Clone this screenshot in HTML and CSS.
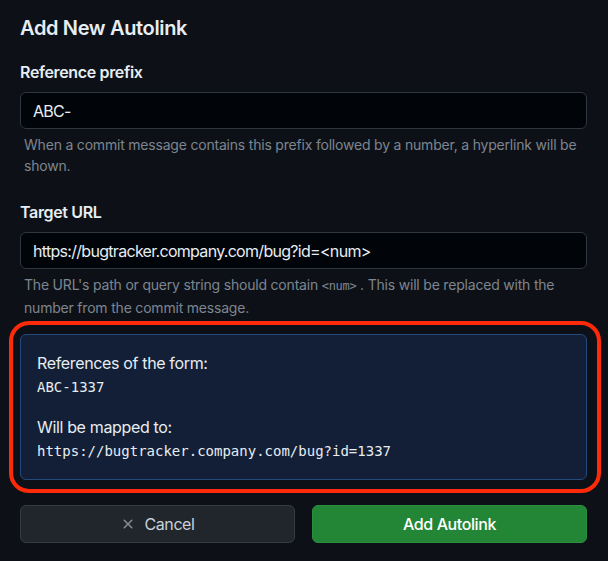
FILE: index.html
```html
<!DOCTYPE html>
<html lang="en">
  <head>
    <meta charset="UTF-8" />
    <meta name="viewport" content="width=device-width, initial-scale=1.0" />
    <title>Add New Autolink</title>
    <link rel="stylesheet" href="styles.css">
  </head>
  <body>
    <main class="autolink-form">
      <h2>Add New Autolink</h2>

      <div class="form-group">
        <label for="prefix">Reference prefix</label>
        <input type="text" id="prefix" value="ABC-" />
        <p class="hint">When a commit message contains this prefix followed by a number, a hyperlink will be shown.</p>
      </div>

      <div class="form-group">
        <label for="target">Target URL</label>
        <input type="text" id="target" value="https://bugtracker.company.com/bug?id=<num>" />
        <p class="hint">The URL's path or query string should contain <code>&lt;num&gt;</code> . This will be replaced with the number from the commit message.</p>
      </div>

      <div class="preview">
        <p>References of the form:</p>
        <p class="mono">ABC-1337</p>
        <p class="spaced">Will be mapped to:</p>
        <p class="mono">https://bugtracker.company.com/bug?id=1337</p>
      </div>

      <div class="actions">
        <button type="button" class="btn btn-cancel">
          <svg width="16" height="16" viewBox="0 0 16 16" aria-hidden="true"><path fill="currentColor" d="M3.72 3.72a.75.75 0 0 1 1.06 0L8 6.94l3.22-3.22a.75.75 0 1 1 1.06 1.06L9.06 8l3.22 3.22a.75.75 0 1 1-1.06 1.06L8 9.06l-3.22 3.22a.75.75 0 0 1-1.06-1.06L6.94 8 3.72 4.78a.75.75 0 0 1 0-1.06Z"/></svg>
          <span>Cancel</span>
        </button>
        <button type="button" class="btn btn-primary">Add Autolink</button>
      </div>
    </main>
  </body>
</html>
```

FILE: styles.css
```css
* {
  margin: 0;
  padding: 0;
  box-sizing: border-box;
}

body {
  font-family: 'Inter', 'Noto Sans', sans-serif;
  background-color: #0d1117;
  color: #e6edf3;
  letter-spacing: -0.35px;
}

.autolink-form {
  padding: 12px 21px 20px 20px;
}

.autolink-form h2 {
  font-size: 20px;
  font-weight: 600;
  line-height: 32px;
  margin-bottom: 16px;
}

.form-group {
  margin-bottom: 24px;
}

label {
  display: block;
  font-size: 16px;
  font-weight: 600;
  line-height: 24px;
  margin-bottom: 8px;
}

input {
  display: block;
  width: 100%;
  height: 37px;
  padding: 0 12px;
  background-color: #010409;
  border: 1px solid #30363d;
  border-radius: 6px;
  color: #e6edf3;
  font-family: inherit;
  font-size: 16px;
  letter-spacing: -0.7px;
}

.hint {
  margin-top: 5px;
  padding-left: 4px;
  font-size: 14px;
  line-height: 21px;
  color: #7d8590;
  letter-spacing: -0.2px;
}

.hint code {
  font-family: 'DejaVu Sans Mono', monospace;
  font-size: 12px;
  letter-spacing: -0.3px;
}

.preview {
  position: relative;
  margin-top: -8px;
  padding: 16px;
  background-color: #131f36;
  border: 1px solid #24497d;
  border-radius: 6px;
  font-size: 16px;
  line-height: 24px;
}

/* review annotation ring */
.preview::after {
  content: '';
  position: absolute;
  inset: -14px -15px -14px -12px;
  border: 4px solid #ff2a0a;
  border-radius: 20px;
  pointer-events: none;
}

.preview .mono {
  font-family: 'DejaVu Sans Mono', monospace;
  font-size: 14px;
  letter-spacing: 0;
}

.preview .spaced {
  margin-top: 16px;
}

.actions {
  display: grid;
  grid-template-columns: 1fr 1fr;
  gap: 17px;
  margin-top: 25px;
}

.btn {
  display: flex;
  align-items: center;
  justify-content: center;
  gap: 8px;
  height: 38px;
  border-radius: 6px;
  font-family: inherit;
  font-size: 16px;
  font-weight: 500;
  letter-spacing: -0.4px;
  cursor: pointer;
}

.btn-cancel {
  background-color: #21262d;
  border: 1px solid #363b42;
  color: #c9d1d9;
  font-weight: 400;
}

.btn-cancel svg {
  color: #848d97;
}

.btn-primary {
  background-color: #238636;
  border: 1px solid #2a8f3c;
  color: #ffffff;
}
```
